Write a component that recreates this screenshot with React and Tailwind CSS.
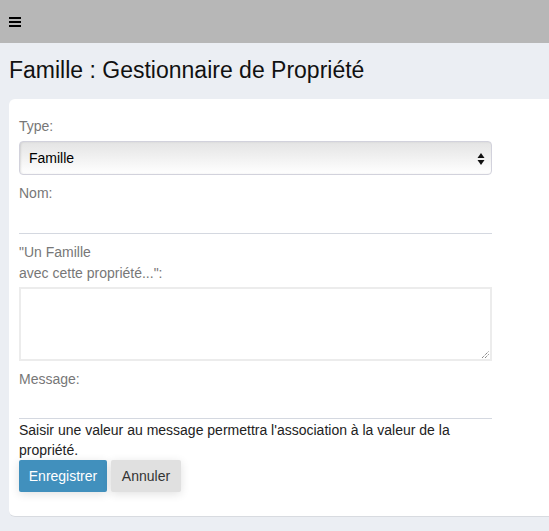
import React from "react";

export default function App() {
  return (
    <div className="min-h-[531px] w-[549px] overflow-hidden bg-[#ebeef3] font-['Liberation_Sans',Arial,sans-serif]">
      <div className="flex h-[43px] items-center bg-[#b7b7b7] pl-[9px]">
        <div className="flex w-[12px] flex-col gap-[2px]">
          <div className="h-[2px] bg-black" />
          <div className="h-[2px] bg-black" />
          <div className="h-[2px] bg-black" />
        </div>
      </div>
      <h1 className="mt-[14px] pl-[9px] text-[23px] leading-[26px] text-[#111]">
        Famille : Gestionnaire de Propriété
      </h1>
      <div className="ml-[9px] mt-[16px] w-[600px] rounded-[6px] border-b border-[#d8dbe0] bg-white pb-[24px] pl-[10px] pt-[17px]">
        <div className="flex w-[473px] flex-col">
          <label className="text-[14px] leading-[20px] text-[#777]">Type:</label>
          <div className="relative mt-[5px] flex h-[34px] items-center rounded-[4px] border border-[#d2d2dc] bg-gradient-to-b from-[#e4e4e4] to-[#ffffff] pl-[9px] text-[14px] text-black shadow-[inset_1px_0_2px_rgba(0,0,0,0.1)]">
            Famille
            <svg className="absolute right-[6px] top-[11px]" width="8" height="12" viewBox="0 0 8 12">
              <path d="M4 0 L7.5 5 L0.5 5 Z" fill="#111" />
              <path d="M4 12 L7.5 7 L0.5 7 Z" fill="#111" />
            </svg>
          </div>
          <label className="mt-[8px] text-[14px] leading-[20px] text-[#777]">Nom:</label>
          <div className="h-[31px] border-b border-[#d4d8e0]" />
          <label className="mt-[8px] text-[14px] leading-[21px] text-[#777]">
            "Un Famille
            <br />
            avec cette propriété...":
          </label>
          <div className="relative mt-[3px] h-[74px] border-2 border-[#ececec] bg-white">
            <svg className="absolute bottom-[1px] right-[1px]" width="8" height="8" viewBox="0 0 8 8">
              <path d="M1 8 L8 1 M4 8 L8 4" stroke="#555" strokeWidth="1" strokeDasharray="1 1" />
            </svg>
          </div>
          <label className="mt-[8px] text-[14px] leading-[20px] text-[#777]">Message:</label>
          <div className="h-[30px] border-b border-[#d4d8e0]" />
          <p className="mt-[1px] text-[14px] leading-[20px] text-[#222]">
            Saisir une valeur au message permettra l'association à la valeur de la propriété.
          </p>
          <div className="flex gap-[4px]">
            <button className="h-[32px] w-[88px] rounded-[2px] bg-[#4190bd] text-[14px] text-white shadow-[0_2px_10px_rgba(0,0,0,0.12)]">
              Enregistrer
            </button>
            <button className="h-[32px] w-[70px] rounded-[2px] bg-[#e0e0e0] text-[14px] text-[#333] shadow-[0_2px_10px_rgba(0,0,0,0.12)]">
              Annuler
            </button>
          </div>
        </div>
      </div>
    </div>
  );
}
